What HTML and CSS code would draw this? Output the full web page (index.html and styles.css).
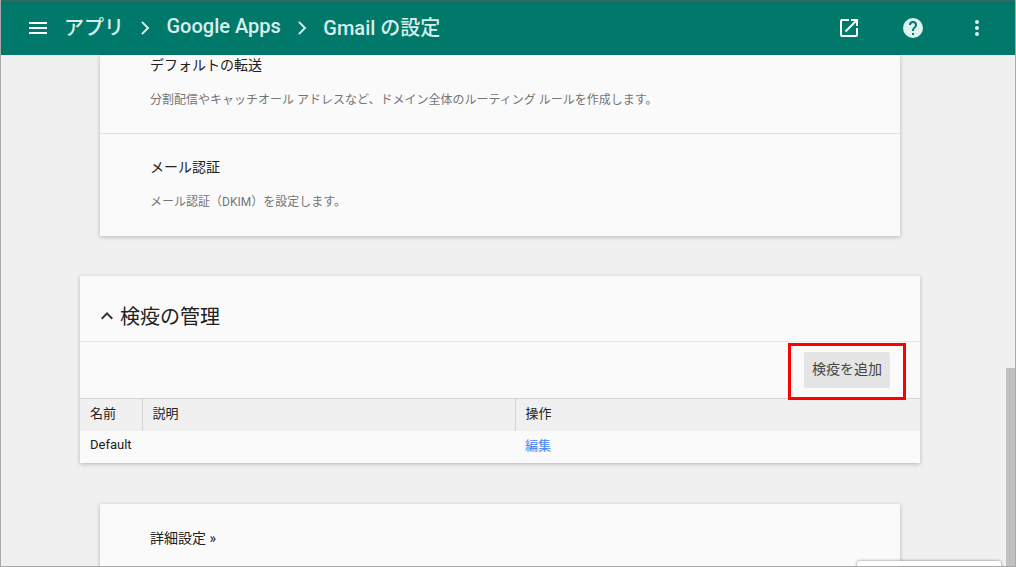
FILE: index.html
```html
<!DOCTYPE html>
<html lang="ja">
<head>
    <meta charset="UTF-8">
    <title>Gmail の設定</title>
    <link rel="stylesheet" href="styles.css">
</head>
<body>
    <div class="window">
        <!-- Top bar -->
        <header class="topbar">
            <svg class="menu-icon" width="24" height="24" viewBox="0 0 24 24"><path d="M3 18h18v-2H3v2zm0-5h18v-2H3v2zm0-7v2h18V6H3z" fill="#fff"/></svg>
            <nav class="crumbs">
                <span>アプリ</span>
                <svg class="crumb-arrow" width="24" height="24" viewBox="0 0 24 24"><path d="M9.2 6.6 10.6 5.2 17.4 12l-6.8 6.8-1.4-1.4L14.6 12z" fill="#d9eeea"/></svg>
                <span>Google Apps</span>
                <svg class="crumb-arrow" width="24" height="24" viewBox="0 0 24 24"><path d="M9.2 6.6 10.6 5.2 17.4 12l-6.8 6.8-1.4-1.4L14.6 12z" fill="#d9eeea"/></svg>
                <span>Gmail の設定</span>
            </nav>
            <div class="actions">
                <svg width="24" height="24" viewBox="0 0 24 24"><path d="M19 19H5V5h7V3H5a2 2 0 0 0-2 2v14a2 2 0 0 0 2 2h14a2 2 0 0 0 2-2v-7h-2v7zM14 3v2h3.6l-9.8 9.8 1.4 1.4L19 6.4V10h2V3h-7z" fill="#fff"/></svg>
                <svg width="24" height="24" viewBox="0 0 24 24"><path d="M12 2a10 10 0 1 0 0 20 10 10 0 0 0 0-20zm1 17h-2v-2h2v2zm2.1-7.7-.9.9c-.8.7-1.2 1.3-1.2 2.8h-2v-.5c0-1.1.4-2.1 1.2-2.8l1.2-1.3c.4-.3.6-.8.6-1.4a2 2 0 0 0-4 0H8a4 4 0 0 1 8 0c0 .9-.4 1.7-.9 2.3z" fill="#e0f2ef"/></svg>
                <svg width="24" height="24" viewBox="0 0 24 24"><path d="M12 8a2 2 0 1 0 0-4 2 2 0 0 0 0 4zm0 2a2 2 0 1 0 0 4 2 2 0 0 0 0-4zm0 6a2 2 0 1 0 0 4 2 2 0 0 0 0-4z" fill="#e0f2ef"/></svg>
            </div>
        </header>

        <main class="content">
            <!-- Settings list -->
            <section class="card">
                <div class="row row-first">
                    <h3>デフォルトの転送</h3>
                    <p>分割配信やキャッチオール アドレスなど、ドメイン全体のルーティング ルールを作成します。</p>
                </div>
                <div class="row row-last">
                    <h3>メール認証</h3>
                    <p>メール認証（DKIM）を設定します。</p>
                </div>
            </section>

            <!-- Quarantine -->
            <section class="card card-wide">
                <div class="section-head">
                    <svg width="24" height="24" viewBox="0 0 24 24"><path d="M12 8l-6 6 1.4 1.4 4.6-4.6 4.6 4.6L18 14z" fill="#333"/></svg>
                    <h2>検疫の管理</h2>
                </div>
                <div class="toolbar">
                    <button class="add-button">検疫を追加</button>
                    <span class="highlight"></span>
                </div>
                <table class="list">
                    <thead>
                        <tr><th class="col-name">名前</th><th class="col-desc">説明</th><th>操作</th></tr>
                    </thead>
                    <tbody>
                        <tr><td>Default</td><td></td><td class="col-action"><a href="#">編集</a></td></tr>
                    </tbody>
                </table>
            </section>

            <section class="card card-advanced">
                <h3>詳細設定 »</h3>
            </section>
        </main>

        <div class="scrollbar"></div>
        <div class="popup"></div>
    </div>
</body>
</html>
```

FILE: styles.css
```css
* {
    box-sizing: border-box;
}

body {
    margin: 0;
    font-family: Roboto, "Noto Sans CJK JP", sans-serif;
    color: #212121;
    overflow: hidden;
}

.window {
    position: relative;
    width: 1016px;
    height: 567px;
    background: #f0f0f0;
    border-left: 1px solid #a8a8a8;
    border-right: 1px solid #a8a8a8;
    border-bottom: 1px solid #a8a8a8;
    overflow: hidden;
}

/* Top bar */
.topbar {
    display: flex;
    align-items: center;
    height: 55px;
    margin: 0 -1px;
    padding-left: 26px;
    background: #00796b;
    border-top: 1px solid #35695f;
    color: #d9eeea;
}

.crumbs {
    display: flex;
    align-items: center;
    margin-left: 14px;
    font-size: 20px;
    font-weight: 500;
}

.crumbs span {
    padding-bottom: 4px;
}

.crumb-arrow {
    margin: 0 10.5px 0 8px;
}

.actions {
    display: flex;
    gap: 40px;
    margin-left: auto;
    margin-right: 27px;
}

/* Cards */
.content {
    display: flex;
    flex-direction: column;
    align-items: center;
    padding-right: 16px;
}

.card {
    width: 800px;
    background: #fafafa;
    box-shadow: 0 1px 4px rgba(0, 0, 0, 0.25);
}

.row {
    padding-left: 50px;
}

.row h3,
.card-advanced h3 {
    margin: 0;
    font-size: 14px;
    font-weight: 400;
    line-height: 20px;
}

.row p {
    margin: 16px 0 0;
    font-size: 12px;
    line-height: 18px;
    color: #757575;
}

.row-first {
    height: 79px;
    border-bottom: 1px solid #e0e0e0;
}

.row-last {
    height: 102px;
    padding-top: 23px;
}

.card-wide {
    width: 840px;
    margin-top: 40px;
}

.section-head {
    display: flex;
    align-items: center;
    height: 66px;
    padding: 14px 0 0 15px;
    border-bottom: 1px solid #e6e6e6;
}

.section-head h2 {
    margin: 0 0 0 1px;
    font-size: 20px;
    font-weight: 400;
}

.toolbar {
    position: relative;
    display: flex;
    justify-content: flex-end;
    align-items: center;
    height: 57px;
    padding-right: 30px;
    border-bottom: 1px solid #d4d4d4;
}

.add-button {
    width: 86px;
    height: 36px;
    padding: 0 0 4px;
    border: none;
    border-radius: 2px;
    background: #e5e5e5;
    color: #444;
    font-family: inherit;
    font-size: 14px;
}

.highlight {
    position: absolute;
    top: 1px;
    right: 14px;
    width: 118px;
    height: 57px;
    border: 3px solid #f00;
}

.list {
    width: 100%;
    border-collapse: collapse;
    font-size: 13px;
}

.list th {
    height: 32px;
    padding: 0 10px 6px;
    background: #f0f0f0;
    border-right: 1px solid #d4d4d4;
    font-weight: 400;
    text-align: left;
}

.list th:last-child {
    border-right: none;
}

.col-name {
    width: 62px;
}

.col-desc {
    width: 373px;
}

.list td {
    height: 32px;
    padding: 0 10px 6px;
    vertical-align: middle;
}

.list .col-action {
    padding-bottom: 6px;
}

.list a {
    color: #4285f4;
    text-decoration: none;
}

.card-advanced {
    height: 70px;
    margin-top: 41px;
    padding: 24px 0 0 50px;
}

/* Overlays */
.scrollbar {
    position: absolute;
    right: 0;
    top: 368px;
    bottom: 0;
    width: 9px;
    background: #c0c0c0;
}

.popup {
    position: absolute;
    left: 856px;
    top: 561px;
    width: 144px;
    height: 12px;
    background: #fff;
    border-radius: 3px;
    box-shadow: 0 0 3px rgba(0, 0, 0, 0.5);
}
```
